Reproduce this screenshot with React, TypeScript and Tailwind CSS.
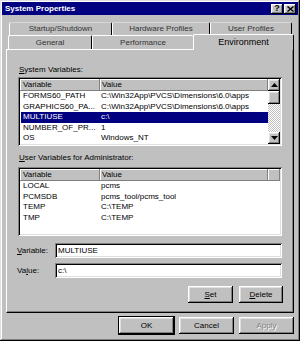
import React from 'react';

const raised =
  'bg-[#c0c0c0] shadow-[inset_-1px_-1px_#000,inset_1px_1px_#fff,inset_-2px_-2px_#808080,inset_2px_2px_#dfdfdf]';
const sunken =
  'shadow-[inset_1px_1px_#808080,inset_-1px_-1px_#fff,inset_2px_2px_#000,inset_-2px_-2px_#dfdfdf]';
const headerCell = 'shadow-[inset_-1px_-1px_#808080,inset_1px_1px_#fff] bg-[#c0c0c0]';

interface Row {
  name: string;
  value: string;
  selected?: boolean;
}

const SYSTEM_VARS: Row[] = [
  { name: 'FORMS60_PATH', value: 'C:\\Win32App\\PVCS\\Dimensions\\6.0\\apps' },
  { name: 'GRAPHICS60_PA...', value: 'C:\\Win32App\\PVCS\\Dimensions\\6.0\\apps' },
  { name: 'MULTIUSE', value: 'c:\\', selected: true },
  { name: 'NUMBER_OF_PR...', value: '1' },
  { name: 'OS', value: 'Windows_NT' },
];

const USER_VARS: Row[] = [
  { name: 'LOCAL', value: 'pcms' },
  { name: 'PCMSDB', value: 'pcms_tool/pcms_tool' },
  { name: 'TEMP', value: 'C:\\TEMP' },
  { name: 'TMP', value: 'C:\\TEMP' },
];

function Arrow({ up }: { up?: boolean }) {
  return (
    <svg width="7" height="4" viewBox="0 0 7 4">
      <path d={up ? 'M3.5 0 L7 4 L0 4 Z' : 'M0 0 L7 0 L3.5 4 Z'} fill="#000" />
    </svg>
  );
}

function ListView({ rows, scroll }: { rows: Row[]; scroll?: boolean }) {
  return (
    <div className={`ml-[11px] w-[264px] h-[69px] bg-white p-[2px] ${sunken}`}>
      <div className="flex h-full">
        <div className="flex-1 flex flex-col overflow-hidden">
          <div className="flex h-[12px] shrink-0">
            <div className={`w-[80px] pl-[3px] leading-[12px] ${headerCell}`}>Variable</div>
            <div className={`flex-1 pl-[2px] leading-[12px] ${headerCell}`}>Value</div>
          </div>
          {rows.map((r) => (
            <div
              key={r.name}
              className={`flex h-[10.5px] leading-[10.5px] ml-[1px] shrink-0 ${
                r.selected ? 'bg-[#000080] text-white' : ''
              }`}
            >
              <span className="w-[79px] pl-[2px] whitespace-nowrap">{r.name}</span>
              <span className="pl-[1px] whitespace-nowrap">{r.value}</span>
            </div>
          ))}
        </div>
        {scroll ? (
          <div className="w-[12px] flex flex-col">
            <div className={`h-[12px] flex items-center justify-center ${raised}`}>
              <Arrow up />
            </div>
            <div className={`h-[13px] ${raised}`} />
            <div className="flex-1 bg-[conic-gradient(#fff_25%,#c0c0c0_0_50%,#fff_0_75%,#c0c0c0_0)] bg-[length:2px_2px]" />
            <div className={`h-[12px] flex items-center justify-center ${raised}`}>
              <Arrow />
            </div>
          </div>
        ) : (
          <div className={`w-[12px] h-[12px] ${headerCell}`} />
        )}
      </div>
    </div>
  );
}

function Button({ children, w, def, disabled }: { children: React.ReactNode; w: string; def?: boolean; disabled?: boolean }) {
  return (
    <div
      className={`${w} h-[17px] flex items-center justify-center ${raised} ${
        def ? 'outline outline-1 outline-black' : ''
      } ${disabled ? 'text-[#808080] [text-shadow:1px_1px_#fff]' : ''}`}
    >
      {children}
    </div>
  );
}

export default function App() {
  return (
    <div className="w-[300px] h-[341px] bg-[#c0c0c0] p-[2px] text-[8px] text-black font-['Liberation_Sans',Arial,sans-serif] shadow-[inset_-1px_-1px_#000,inset_1px_1px_#dfdfdf,inset_-2px_-2px_#808080,inset_2px_2px_#fff]">
      {/* title bar */}
      <div className="h-[13px] bg-[#000080] flex items-center justify-between pl-[3px] pr-[2px]">
        <span className="text-white font-bold leading-[13px]">System Properties</span>
        <div className="flex gap-[1px]">
          <div className={`w-[12px] h-[10px] flex items-center justify-center font-bold text-[9px] leading-none ${raised}`}>?</div>
          <div className={`w-[12px] h-[10px] flex items-center justify-center ${raised}`}>
            <svg width="7" height="6" viewBox="0 0 7 6">
              <path d="M0.5 0.5 L6.5 5.5 M6.5 0.5 L0.5 5.5" stroke="#000" strokeWidth="1.4" />
            </svg>
          </div>
        </div>
      </div>

      <div className="px-[4px] pt-[7px]">
        {/* back tab row */}
        <div className="flex pl-[3px] h-[13px]">
          <div className="w-[103px] border-t border-l border-r border-t-[#d8d8d8] border-l-white border-r-black rounded-t-[2px] text-center leading-[12px] text-[#333]">
            Startup/Shutdown
          </div>
          <div className="w-[98px] border-t border-l border-r border-t-[#d8d8d8] border-l-white border-r-black rounded-t-[2px] text-center leading-[12px] text-[#333]">
            Hardware Profiles
          </div>
          <div className="w-[82px] border-t border-l border-r border-t-[#d8d8d8] border-l-white border-r-black rounded-t-[2px] text-center leading-[12px] text-[#333]">
            User Profiles
          </div>
        </div>
        {/* front tab row */}
        <div className="flex items-end pl-[2px] h-[14px]">
          <div className="w-[84px] h-[14px] border-t border-l border-r border-t-white border-l-white border-r-black rounded-t-[2px] text-center leading-[13px] text-[#333]">
            General
          </div>
          <div className="w-[101px] h-[14px] border-t border-l border-t-white border-l-white rounded-t-[2px] text-center leading-[13px] text-[#333]">
            Performance
          </div>
          <div className="relative z-10 w-[101px] h-[16px] -mb-[1px] bg-[#c0c0c0] border-t border-l border-r border-t-white border-l-white border-r-black rounded-t-[2px] text-center text-[9px] leading-[14px]">
            Environment
          </div>
        </div>

        {/* panel */}
        <div className="h-[264px] border border-t-white border-l-white border-r-black border-b-black shadow-[inset_-1px_-1px_#808080]">
          <div className="pt-[15px] pl-[12px] leading-[10px]">
            <u>S</u>ystem Variables:
          </div>
          <div className="mt-[2px]">
            <ListView rows={SYSTEM_VARS} scroll />
          </div>
          <div className="mt-[7px] pl-[12px] leading-[10px]">
            <u>U</u>ser Variables for Administrator:
          </div>
          <div className="mt-[4px]">
            <ListView rows={USER_VARS} />
          </div>

          <div className="mt-[7px] flex items-center pl-[10px]">
            <span className="w-[38px]">
              <u>V</u>ariable:
            </span>
            <div className={`w-[227px] h-[15px] bg-white pl-[3px] leading-[15px] ${sunken}`}>MULTIUSE</div>
          </div>
          <div className="mt-[5px] flex items-center pl-[10px]">
            <span className="w-[38px]">
              Va<u>l</u>ue:
            </span>
            <div className={`w-[227px] h-[15px] bg-white pl-[3px] leading-[15px] ${sunken}`}>c:\</div>
          </div>

          <div className="mt-[8px] flex justify-end gap-[6px] pr-[10px]">
            <Button w="w-[45px]">
              <span>
                <u>S</u>et
              </span>
            </Button>
            <Button w="w-[44px]">
              <span>
                <u>D</u>elete
              </span>
            </Button>
          </div>
        </div>

        {/* dialog buttons */}
        <div className="mt-[4px] flex justify-end gap-[5px]">
          <Button w="w-[55px]" def>
            OK
          </Button>
          <Button w="w-[55px]">Cancel</Button>
          <Button w="w-[55px]" disabled>
            Apply
          </Button>
        </div>
      </div>
    </div>
  );
}
